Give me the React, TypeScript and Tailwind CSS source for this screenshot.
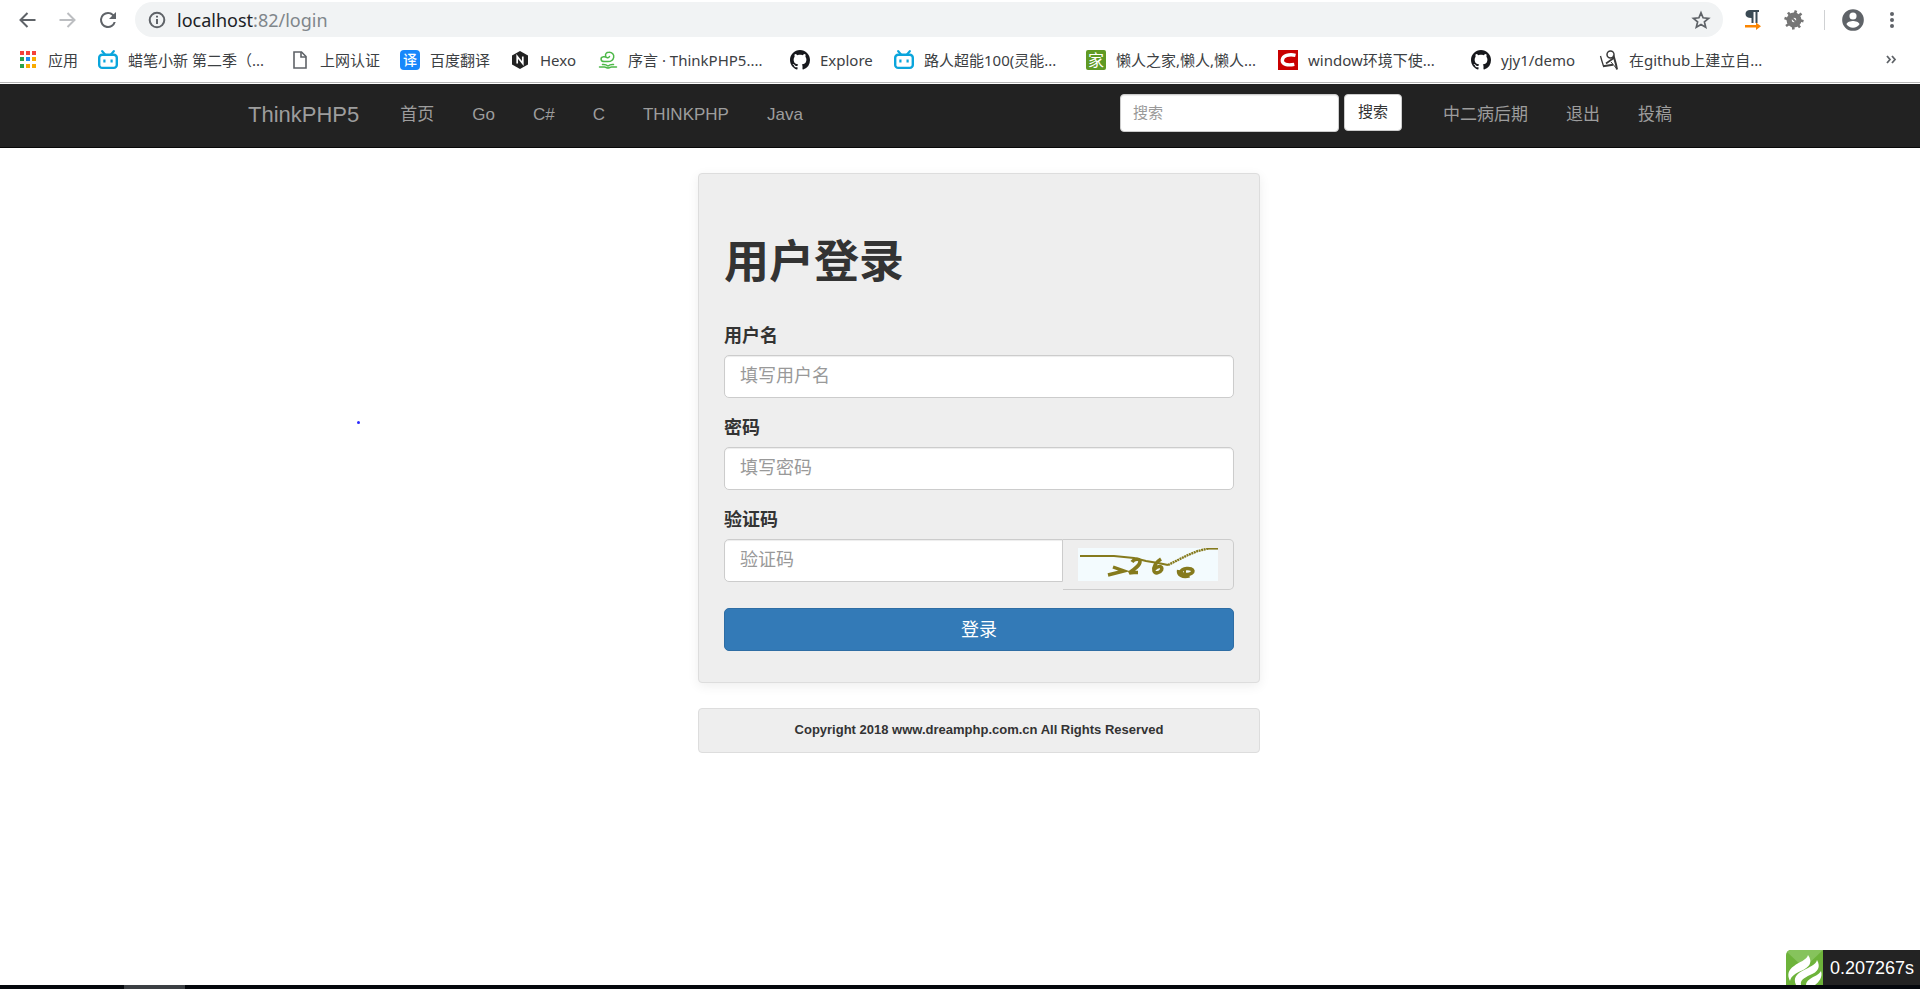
import type { ReactNode } from "react";

const CHROME_FONT = "font-['Noto_Sans','Noto_Sans_CJK_SC',sans-serif]";

function BiliIcon() {
  return (
    <svg viewBox="0 0 20 20" className="size-5" fill="none" aria-hidden="true">
      <path d="M4.2 1.2 7 4.4M15.8 1.2 13 4.4" stroke="#0aa5dc" strokeWidth="2.2" strokeLinecap="round" />
      <rect x="1.2" y="4.7" width="17.6" height="13.2" rx="3" stroke="#0aa5dc" strokeWidth="2.4" />
      <path d="M6.4 9.4v3M13.6 9.4v3" stroke="#0aa5dc" strokeWidth="2.2" />
    </svg>
  );
}

function GithubIcon() {
  return (
    <svg viewBox="0 0 16 16" className="size-5" fill="#17181c" aria-hidden="true">
      <path d="M8 0C3.58 0 0 3.58 0 8c0 3.54 2.29 6.53 5.47 7.59.4.07.55-.17.55-.38 0-.19-.01-.82-.01-1.49-2.01.37-2.53-.49-2.69-.94-.09-.23-.48-.94-.82-1.13-.28-.15-.68-.52-.01-.53.63-.01 1.08.58 1.23.82.72 1.21 1.87.87 2.33.66.07-.52.28-.87.51-1.07-1.78-.2-3.64-.89-3.64-3.95 0-.87.31-1.59.82-2.15-.08-.2-.36-1.02.08-2.12 0 0 .67-.21 2.2.82.64-.18 1.32-.27 2-.27s1.36.09 2 .27c1.53-1.04 2.2-.82 2.2-.82.44 1.1.16 1.92.08 2.12.51.56.82 1.27.82 2.15 0 3.07-1.87 3.75-3.65 3.95.29.25.54.73.54 1.48 0 1.07-.01 1.93-.01 2.2 0 .21.15.46.55.38A8.01 8.01 0 0 0 16 8c0-4.42-3.58-8-8-8Z" />
    </svg>
  );
}

function AppsIcon() {
  return (
    <svg viewBox="0 0 20 20" className="size-5" aria-hidden="true">
      <path fill="#f4413a" d="M2 1h4v4H2zM8 1h4v4H8zM14 1h4v4h-4z" />
      <path fill="#2ba24c" d="M2 7h4v4H2zM2 14h4v4H2z" />
      <path fill="#1f87f0" d="M8 7h4v4H8z" />
      <path fill="#f9ab00" d="M14 7h4v4h-4zM8 14h4v4H8zM14 14h4v4h-4z" />
    </svg>
  );
}

function PageIcon() {
  return (
    <svg viewBox="0 0 20 20" className="size-5" fill="none" stroke="#5f6368" strokeWidth="1.6" aria-hidden="true">
      <path d="M4 2h7.5L16 6.5V18H4z" />
      <path d="M11 2v5h5" />
    </svg>
  );
}

function HexoIcon() {
  return (
    <svg viewBox="0 0 20 20" className="size-5" aria-hidden="true">
      <path fill="#222" d="M10 1l8 4.6v8.8L10 19l-8-4.6V5.6z" />
      <path d="M7.2 13.5v-7l5.6 7v-7" fill="none" stroke="#fff" strokeWidth="1.7" />
    </svg>
  );
}

function CloudBookIcon() {
  return (
    <svg viewBox="0 0 20 20" className="size-5" fill="none" stroke="#4db848" strokeWidth="1.5" strokeLinecap="round" aria-hidden="true">
      <path d="M11.500 6.500c-.8 1.800-3 1.300-3.800-.2C6.900 4 8.500 2.200 10.800 2.200c3.500-.2 5.400 2.500 4.900 5.100-.6 2.700-2.700 4.200-5.700 4.200H6.300c-4 0-4.300-4.300-.8-4.800 1.600-.2 2.700.4 3.600 1" />
      <path d="M4.500 14.500c2.200-.3 4 .3 5.500 1.500 1.500-1.200 3.300-1.800 5.500-1.500" />
      <path d="M1.500 17h5c1.500 0 2 1 3.500 1s2-1 3.500-1h5" />
    </svg>
  );
}

function FigureIcon() {
  return (
    <svg viewBox="0 0 20 20" className="size-5" fill="none" stroke="#3a3a3a" aria-hidden="true">
      <circle cx="11.500" cy="4.500" r="3.500" strokeWidth="1.500" />
      <path d="M1.500 6c1 4 2 7 3 10" strokeWidth="1.300" />
      <path d="M4 16.200l10-1.400" strokeWidth="1.900" />
      <path d="M7 13.500l8.500-6" strokeWidth="1.700" />
      <path d="M14.500 5.500l2.500 9 1 5" strokeWidth="2" />
      <path d="M12 12l6 7" strokeWidth="1" />
    </svg>
  );
}

function Tile({ className, children }: { className: string; children: ReactNode }) {
  return (
    <span className={`flex size-5 items-center justify-center leading-none text-white ${className}`}>{children}</span>
  );
}

function CIcon() {
  return (
    <svg viewBox="0 0 20 20" className="size-5" aria-hidden="true">
      <path fill="#c90000" d="M0 0h20v20H0z" />
      <path d="M17.500 5.300C11 3.800 4.800 5.600 4.300 10c-.4 4.400 5 5.700 12 4.400" fill="none" stroke="#fff" strokeWidth="3.400" />
    </svg>
  );
}

const bookmarks: { label: string; width: string; icon: ReactNode }[] = [
  { label: "应用", width: "w-20", icon: <AppsIcon /> },
  { label: "蜡笔小新 第二季（...", width: "w-48", icon: <BiliIcon /> },
  { label: "上网认证", width: "w-[110px]", icon: <PageIcon /> },
  { label: "百度翻译", width: "w-[110px]", icon: <Tile className="rounded-sm bg-[#1787fb] text-sm font-medium">译</Tile> },
  { label: "Hexo", width: "w-[88px]", icon: <HexoIcon /> },
  { label: "序言 · ThinkPHP5....", width: "w-48", icon: <CloudBookIcon /> },
  { label: "Explore", width: "w-[104px]", icon: <GithubIcon /> },
  { label: "路人超能100(灵能...", width: "w-48", icon: <BiliIcon /> },
  { label: "懒人之家,懒人,懒人...", width: "w-48", icon: <Tile className="rounded-xs bg-[#5f9a24] text-base">家</Tile> },
  { label: "window环境下使...", width: "w-[193px]", icon: <CIcon /> },
  { label: "yjy1/demo", width: "w-32", icon: <GithubIcon /> },
  { label: "在github上建立自...", width: "w-48", icon: <FigureIcon /> },
];

function BrowserBar() {
  return (
    <header className={`border-b border-[#b6b6b6] bg-white ${CHROME_FONT}`}>
      <div className="flex h-[39px] items-center pr-[18px] pl-4">
        <button type="button" aria-label="后退" className="mr-5 size-5">
          <svg viewBox="0 0 20 20" fill="none" stroke="#5f6368" strokeWidth="2"><path d="M19.500 10H4.500M11.500 3 4.500 10l7 7" /></svg>
        </button>
        <button type="button" aria-label="前进" className="mr-5 size-5">
          <svg viewBox="0 0 20 20" fill="none" stroke="#bcbec1" strokeWidth="2"><path d="M3.500 10h15M11.500 3l7 7-7 7" /></svg>
        </button>
        <button type="button" aria-label="重新加载" className="mr-[15px] size-6">
          <svg viewBox="0 0 24 24" fill="#5f6368"><path d="M17.650 6.350A7.960 7.960 0 0 0 12 4a8 8 0 1 0 7.730 10h-2.080A6 6 0 1 1 12 6c1.660 0 3.140.69 4.220 1.780L13 11h7V4l-2.350 2.350z" /></svg>
        </button>
        <div className="flex h-[35px] flex-1 items-center rounded-full bg-[#f1f3f4] px-3">
          <svg viewBox="0 0 20 20" className="size-5" fill="none" stroke="#5f6368" strokeWidth="2" aria-hidden="true">
            <circle cx="10" cy="10" r="7.300" />
            <path d="M10 9v5M10 5.800v1.800" />
          </svg>
          <p className="ml-[10px] flex-1 text-lg leading-6 text-[#80868b]"><span className="text-[#202124]">localhost</span>:82/login</p>
          <button type="button" aria-label="为此网页添加书签" className="size-5">
            <svg viewBox="0 0 20 20" fill="none" stroke="#5f6368" strokeWidth="1.700"><path d="m10 2.800 2.100 5 5.500.5-4.200 3.600 1.300 5.300-4.700-2.800-4.700 2.800 1.300-5.300-4.200-3.600 5.500-.5z" /></svg>
          </button>
        </div>
        <div className="flex items-center pl-5">
          <svg viewBox="0 0 20 22" className="h-6 w-5" aria-hidden="true">
            <path fill="#3a4a54" d="M7 1h9v2h-1.500v11h-2V3H10.500v11h-2V9C4.500 9 2.500 7.500 2.500 5S4.500 1 7 1z" />
            <path fill="#fb8500" d="M2 16h11v-2.500l5 3.700-5 3.800v-2.500H2z" />
          </svg>
          <svg viewBox="0 0 20 20" className="ml-[21px] size-5" fill="none" stroke="#757575" aria-hidden="true">
            <circle cx="10" cy="10" r="4.900" strokeWidth="5.200" />
            <path strokeWidth="2.600" d="M11 3.500 12 .5M15 5.500l2.500-2M16.500 10.500l3 .8M14 15l2 2.500M9 16.500l.5 3M5 14l-3 2M3.500 9 .5 8M6 5 4 2.500" />
            <path strokeWidth="2" d="m7.500 7.500 5 5" />
          </svg>
          <span className="ml-5 h-5 w-px bg-[#cfd1d3]" />
          <svg viewBox="0 0 24 24" className="ml-[15px] size-[26px]" fill="#5f6368" aria-hidden="true">
            <path d="M12 2a10 10 0 1 0 0 20 10 10 0 0 0 0-20zm0 3a3.300 3.300 0 1 1 0 6.600A3.300 3.300 0 0 1 12 5zm0 14.200a7.200 7.200 0 0 1-6-3.200c.03-2 4-3.100 6-3.100s5.970 1.100 6 3.100a7.200 7.200 0 0 1-6 3.200z" />
          </svg>
          <svg viewBox="0 0 20 20" className="ml-4 size-5" fill="#5f6368" aria-hidden="true">
            <circle cx="10" cy="4" r="2" /><circle cx="10" cy="10" r="2" /><circle cx="10" cy="16" r="2" />
          </svg>
        </div>
      </div>
      <nav aria-label="书签" className="flex h-[43px] items-center pr-[22px] pb-[2px] pl-[18px] text-[15px] leading-5 text-[#3c4043]">
        {bookmarks.map((b) => (
          <a key={b.label} href="#" className={`flex shrink-0 items-center gap-[10px] whitespace-nowrap ${b.width}`}>
            {b.icon}
            <span>{b.label}</span>
          </a>
        ))}
        <button type="button" aria-label="更多书签" className="ml-auto flex h-8 items-center">
          <svg viewBox="0 0 14 14" className="size-[14px]" fill="none" stroke="#5f6368" strokeWidth="1.800" aria-hidden="true"><path d="m3 3 3 3.500L3 10M8 3l3 3.500L8 10" /></svg>
        </button>
      </nav>
    </header>
  );
}

function NavLink({ children }: { children: ReactNode }) {
  return <a href="#" className="px-[19px] text-[17px] leading-6 text-[#9d9d9d] hover:text-white">{children}</a>;
}

function SiteNav() {
  return (
    <nav className="mt-px border-b border-[#080808] bg-[#222]">
      <div className="mx-auto flex h-[63px] max-w-[1462px] items-center justify-between pb-[2px]">
        <div className="flex items-center">
          <a href="#" className="pr-[22px] pl-[19px] text-[22px] leading-6 text-[#9d9d9d]">ThinkPHP5</a>
          {["首页", "Go", "C#", "C", "THINKPHP", "Java"].map((t) => (
            <NavLink key={t}>{t}</NavLink>
          ))}
        </div>
        <div className="flex items-center">
          <form className="mr-[22px] mb-1 flex items-start gap-[5px]" onSubmit={(e) => e.preventDefault()}>
            <input type="text" aria-label="搜索" placeholder="搜索" className="h-[38px] w-[219px] rounded-[4px] border border-[#ccc] bg-white px-3 text-[15px] text-[#555] shadow-[inset_0_1px_1px_rgba(0,0,0,0.075)] placeholder:text-[#999]" />
            <button type="submit" className="h-[37px] rounded-[4px] border border-[#ccc] bg-white px-[13px] text-[15px] text-[#333]">搜索</button>
          </form>
          {["中二病后期", "退出", "投稿"].map((t) => (
            <NavLink key={t}>{t}</NavLink>
          ))}
        </div>
      </div>
    </nav>
  );
}

const FIELD =
  "h-[43px] w-full border border-[#ccc] bg-white px-[15px] text-lg text-[#555] shadow-[inset_0_1px_1px_rgba(0,0,0,0.075)] placeholder:text-[#999]";

const LABEL = "mb-[6px] block text-lg leading-[25px] font-bold";

function Captcha() {
  return (
    <svg viewBox="0 0 140 33" className="h-[33px] w-[140px]" fill="none" stroke="#857a1d" role="img" aria-label="验证码图片">
      <path fill="#f3fbfe" stroke="none" d="M0 0h140v33H0z" />
      <path strokeWidth="2.200" d="M2 8h34l20 2 12 3 12 2 10 2" />
      <path strokeWidth="2.400" strokeDasharray="2 0.6" d="M90 17l10-5 10-5 10-4 10-2.500" />
      <path strokeWidth="1.600" d="M129 .8h11" />
      <path strokeWidth="3.400" d="M30 27l16-4-11-4" />
      <path strokeWidth="3.600" d="M54 14c2-3 8-4 8-.5 0 4-6 8-11 11.500 3-1 6-.5 9-.5" />
      <path strokeWidth="3.600" d="M83 11c-5 3-8 8-7 12 1 3 6 2 7.500-1 1.500-4-3-5-7-1" />
      <ellipse cx="109" cy="23.500" rx="6" ry="3" strokeWidth="3.600" transform="rotate(-6 109 23.500)" />
      <path strokeWidth="3.200" d="M100.500 22c-1 5 4 8 11 6" />
      <path strokeWidth="2" d="M107 21v5" />
    </svg>
  );
}

function LoginCard() {
  return (
    <form
      onSubmit={(e) => e.preventDefault()}
      className="rounded-[4px] border border-[#ddd] bg-[#eee] px-[25px] pt-[61px] pb-[31px] shadow-[0_3px_12px_rgba(0,0,0,0.07)]"
    >
      <h1 className="text-[45px] leading-[56px] font-bold">用户登录</h1>
      <div className="mt-[33px] flex flex-col gap-[18px]">
        <div>
          <label htmlFor="username" className={LABEL}>用户名</label>
          <input id="username" type="text" placeholder="填写用户名" className={`${FIELD} rounded-[5px]`} />
        </div>
        <div>
          <label htmlFor="password" className={LABEL}>密码</label>
          <input id="password" type="password" placeholder="填写密码" className={`${FIELD} rounded-[5px]`} />
        </div>
        <div>
          <label htmlFor="captcha" className={LABEL}>验证码</label>
          <div className="flex items-start">
            <input id="captcha" type="text" placeholder="验证码" className={`${FIELD} min-w-0 rounded-l-[5px]`} />
            <div className="shrink-0 rounded-r-[5px] border border-l-0 border-[#ccc] px-[15px] py-2">
              <Captcha />
            </div>
          </div>
        </div>
        <button type="submit" className="h-[43px] rounded-[5px] border border-[#2e6da4] bg-[#337ab7] text-lg leading-6 text-white">登录</button>
      </div>
    </form>
  );
}

function TraceBadge() {
  return (
    <button type="button" className="fixed right-0 bottom-1 flex h-[35px] items-stretch bg-[#232323] text-lg text-white">
      <svg viewBox="0 0 37 35" className="h-[35px] w-[37px] bg-white" aria-hidden="true">
        <path fill="#6db33a" d="M5 0h32v35H0V5a5 5 0 0 1 5-5z" />
        <path fill="#86c35c" d="M5 0h32L18 18 1 2q1.500-2 4-2z" />
        <path fill="#fff" d="M22 5C21 10 13 12 8 16 2 20 1 25 4 31 5 26 10 23 15 21 24 17 27 12 22 5z" />
        <path fill="#fff" d="M31 10C30 15 23 17 18 20c-8 4-11 8-8 15h5c-1-5 3-7 9-10 8-3 11-8 7-15z" />
        <path fill="#fff" d="M35 21c-2 4-7 5-11 8-3 2-4 4-4 6h9c4-3 8-8 6-14z" />
      </svg>
      <span className="flex items-center pr-[6px] pl-[7px]">0.207267s</span>
    </button>
  );
}

export default function App() {
  return (
    <div className="flex min-h-screen flex-col bg-white font-['Liberation_Sans','Noto_Sans_CJK_SC',sans-serif] text-[#333]">
      <BrowserBar />
      <SiteNav />
      <main className="relative flex-1 pl-[38px]">
        <span className="absolute top-[273px] left-[357px] size-[3px] rounded-full bg-[#2a2aff]" />
        <div className="mx-auto mt-[25px] w-[562px] max-w-full">
          <LoginCard />
          <footer className="mt-[25px] rounded-[4px] border border-[#ddd] bg-[#eee] pt-[9px] pb-[11px] text-center text-[13px] leading-[23px] font-bold">
            Copyright 2018 www.dreamphp.com.cn All Rights Reserved
          </footer>
        </div>
      </main>
      <div className="fixed inset-x-0 bottom-0 flex h-1 bg-[#05080d]">
        <span className="ml-[124px] w-[61px] bg-[#3b3f43]" />
      </div>
      <TraceBadge />
    </div>
  );
}
